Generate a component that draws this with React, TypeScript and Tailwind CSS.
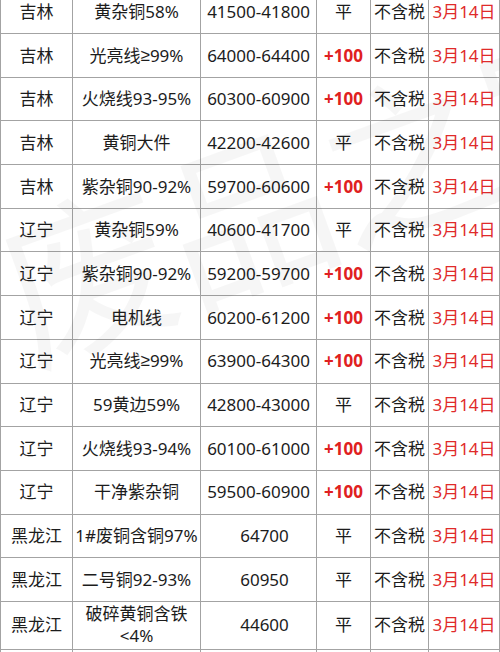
import React from "react";

type Row = {
  region: string;
  name: React.ReactNode;
  price: string;
  change: string;
  tax: string;
  date: string;
  tall?: boolean;
};

const Ge = () => <span style={{ fontFamily: '"Liberation Sans", sans-serif' }}>≥</span>;

const rows: Row[] = [
  { region: "吉林", name: "黄杂铜58%", price: "41500-41800", change: "平", tax: "不含税", date: "3月14日" },
  { region: "吉林", name: <>光亮线<Ge />99%</>, price: "64000-64400", change: "+100", tax: "不含税", date: "3月14日" },
  { region: "吉林", name: "火烧线93-95%", price: "60300-60900", change: "+100", tax: "不含税", date: "3月14日" },
  { region: "吉林", name: "黄铜大件", price: "42200-42600", change: "平", tax: "不含税", date: "3月14日" },
  { region: "吉林", name: "紫杂铜90-92%", price: "59700-60600", change: "+100", tax: "不含税", date: "3月14日" },
  { region: "辽宁", name: "黄杂铜59%", price: "40600-41700", change: "平", tax: "不含税", date: "3月14日" },
  { region: "辽宁", name: "紫杂铜90-92%", price: "59200-59700", change: "+100", tax: "不含税", date: "3月14日" },
  { region: "辽宁", name: "电机线", price: "60200-61200", change: "+100", tax: "不含税", date: "3月14日" },
  { region: "辽宁", name: <>光亮线<Ge />99%</>, price: "63900-64300", change: "+100", tax: "不含税", date: "3月14日" },
  { region: "辽宁", name: "59黄边59%", price: "42800-43000", change: "平", tax: "不含税", date: "3月14日" },
  { region: "辽宁", name: "火烧线93-94%", price: "60100-61000", change: "+100", tax: "不含税", date: "3月14日" },
  { region: "辽宁", name: "干净紫杂铜", price: "59500-60900", change: "+100", tax: "不含税", date: "3月14日" },
  { region: "黑龙江", name: "1#废铜含铜97%", price: "64700", change: "平", tax: "不含税", date: "3月14日" },
  { region: "黑龙江", name: "二号铜92-93%", price: "60950", change: "平", tax: "不含税", date: "3月14日" },
  {
    region: "黑龙江",
    name: (
      <>
        破碎黄铜含铁
        <br />
        &lt;4%
      </>
    ),
    price: "44600",
    change: "平",
    tax: "不含税",
    date: "3月14日",
    tall: true,
  },
  { region: "", name: "", price: "", change: "", tax: "", date: "" },
];

const cell = "flex items-center justify-center whitespace-nowrap border-r border-b border-[#a3a3a3] text-center";

export default function App() {
  return (
    <div
      className="relative h-[652px] w-[500px] overflow-hidden bg-white text-[17px] text-[#1c1c1c]"
      style={{ fontFamily: '"Noto Sans", "Noto Sans CJK SC", sans-serif' }}
    >
      <div className="-mt-[9.7px] grid grid-cols-[73px_128px_116px_54px_58px_71px]">
        {rows.map((row, i) => {
          const h = row.tall ? "h-[48px] leading-[22px]" : "h-[43.7px]";
          const single = !row.price.includes("-");
          return (
            <React.Fragment key={i}>
              <div className={`${cell} ${h} border-l`}>{row.region}</div>
              <div className={`${cell} ${h}`}>{row.name}</div>
              <div className={`${cell} ${h} ${single ? "pl-3" : ""}`}>{row.price}</div>
              <div className={`${cell} ${h} ${row.change === "+100" ? "font-bold text-[#e02020]" : ""}`}>
                {row.change}
              </div>
              <div className={`${cell} ${h}`}>{row.tax}</div>
              <div className={`${cell} ${h} text-[#e02a2a]`}>{row.date}</div>
            </React.Fragment>
          );
        })}
      </div>
      <div
        aria-hidden
        className="pointer-events-none absolute left-[5px] top-[210px] origin-left -rotate-[20deg] select-none whitespace-nowrap text-[170px] leading-none text-black/[0.035]"
        style={{ fontFamily: '"Noto Sans CJK SC", sans-serif' }}
      >
        废品之家
      </div>
    </div>
  );
}
